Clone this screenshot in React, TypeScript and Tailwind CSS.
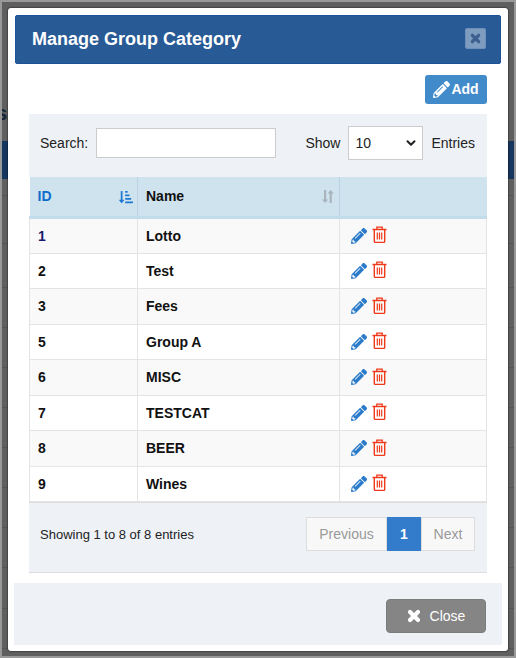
import React from 'react';
import { FaPencilAlt, FaSortAmountDownAlt } from 'react-icons/fa';
import { ChevronDown } from 'lucide-react';

const rows = [
    { id: 1, name: 'Lotto' },
    { id: 2, name: 'Test' },
    { id: 3, name: 'Fees' },
    { id: 5, name: 'Group A' },
    { id: 6, name: 'MISC' },
    { id: 7, name: 'TESTCAT' },
    { id: 8, name: 'BEER' },
    { id: 9, name: 'Wines' },
];

const backdropLines = [195, 243, 287, 327, 367, 407, 447, 487, 527, 567, 608, 648];

const SortBoth = () => (
    <svg width="14" height="15" viewBox="0 0 14 15" fill="#a9b4bd">
        <path d="M3 1h2.200v9.500h2L4.100 14 1 10.500h2zM10.800 14H8.600V4.500h-2L9.700 1l3.100 3.500h-2z" />
    </svg>
);

const CloseX = ({ size }: { size: number }) => (
    <svg width={size} height={size} viewBox="0 0 14 14" fill="none" stroke="currentColor" strokeWidth="4.200" strokeLinecap="round">
        <path d="M3 3l8 8M11 3l-8 8" />
    </svg>
);

const Trash = () => (
    <svg width="15" height="17" viewBox="0 0 15 17" fill="none" stroke="#ee3a1a" className="mb-[2px] shrink-0">
        <path d="M0.500 3.500h14" strokeWidth="1.500" />
        <path d="M4.800 3.200V1.200h5.400v2" strokeWidth="1.300" />
        <path d="M2.300 3.500v11.700a1.200 1.200 0 0 0 1.200 1.200h8a1.200 1.200 0 0 0 1.200-1.200V3.500" strokeWidth="1.400" />
        <path d="M5.300 6.500v7M7.500 6.500v7M9.700 6.500v7" strokeWidth="1.200" />
    </svg>
);

export default function App() {
    return (
        <div className="relative h-[658px] w-[516px] overflow-hidden border-2 border-[#999] bg-[#5f5f5f] font-['Liberation_Sans',Arial,sans-serif] text-[14px] text-[#222]">
            <div className="absolute left-0 top-[139px] h-[38px] w-full bg-[#16365f]" />
            <div className="absolute left-[-6px] top-[96px] text-[20px] font-bold text-[#14233a]">s</div>
            {backdropLines.map((y) => (
                <div key={y} className="absolute left-0 h-px w-full bg-[#555]" style={{ top: y - 2 }} />
            ))}

            <div className="absolute left-[6px] top-[6px] h-[643px] w-[500px] rounded-[3px] bg-white shadow-[0_0_2px_#000]">
                <div className="flex h-full flex-col px-[7px] pt-[7px]">
                    <div className="flex h-[49px] shrink-0 items-center justify-between rounded-[2px] border border-[#1c5398] bg-[#285a96] pl-[16px] pr-[14px]">
                        <h1 className="text-[18px] font-bold text-white">Manage Group Category</h1>
                        <button className="mb-[3px] flex h-[21px] w-[21px] items-center justify-center rounded-[2px] border border-[#6f90bb] bg-[#7e9bc0] text-[#3c5f8e]">
                            <CloseX size={11} />
                        </button>
                    </div>

                    <div className="mx-[14px] flex justify-end pt-[11px]">
                        <button className="flex h-[29px] w-[62px] items-center justify-center gap-[1px] rounded-[3px] bg-[#428bca] text-[14px] font-bold text-white">
                            <FaPencilAlt size={17} />
                            Add
                        </button>
                    </div>

                    <div className="mx-[14px] mt-[10px] flex flex-col border-b border-[#ddd] bg-[#eef1f6]">
                        <div className="flex h-[63px] items-center pb-[5px] pl-[11px] pr-[12px]">
                            <span>Search:</span>
                            <input className="ml-[8px] h-[30px] w-[180px] border border-[#ccc] bg-white" />
                            <span className="ml-auto">Show</span>
                            <div className="ml-[8px] flex h-[34px] w-[75px] items-center justify-between border border-[#ccc] bg-white pl-[6px] pr-[4px] text-[14px]">
                                10
                                <ChevronDown size={14} strokeWidth={3.5} />
                            </div>
                            <span className="ml-[8px]">Entries</span>
                        </div>

                        <table className="w-full table-fixed border-collapse bg-white">
                            <thead>
                                <tr className="h-[40.5px] border-b-[3px] border-[#c3dcea] bg-[#cfe3ef] font-bold">
                                    <th className="w-[108px] border-r border-[#b9d3e2] pl-[8px] pr-[4px] text-left text-[#0d6ecb]">
                                        <div className="flex items-center justify-between">
                                            ID
                                            <FaSortAmountDownAlt size={14} className="text-[#1d78d2]" />
                                        </div>
                                    </th>
                                    <th className="w-[202px] border-r border-[#b9d3e2] pl-[8px] pr-[4px] text-left text-[#111]">
                                        <div className="flex items-center justify-between">
                                            Name
                                            <SortBoth />
                                        </div>
                                    </th>
                                    <th />
                                </tr>
                            </thead>
                            <tbody>
                                {rows.map((row, i) => (
                                    <tr key={row.id} className={`h-[35.5px] border-b border-[#e4e4e4] font-bold text-[#111] ${i % 2 === 0 ? 'bg-[#f9f9f9]' : 'bg-white'}`}>
                                        <td className={`border-x border-[#e4e4e4] px-[8px] pt-[1px] ${row.id === 1 ? 'text-[#1a1a6e]' : ''}`}>{row.id}</td>
                                        <td className="border-r border-[#e4e4e4] px-[8px] pt-[1px]">{row.name}</td>
                                        <td className="border-r border-[#e4e4e4] px-[11px]">
                                            <div className="flex items-center gap-[5px]">
                                                <FaPencilAlt size={16} className="text-[#2a7bc9]" />
                                                <Trash />
                                            </div>
                                        </td>
                                    </tr>
                                ))}
                            </tbody>
                        </table>

                        <div className="flex h-[69.5px] items-center justify-between border-t border-[#ddd] pb-[6px] pl-[11px] pr-[12px]">
                            <span className="text-[13px]">Showing 1 to 8 of 8 entries</span>
                            <div className="flex h-[34px] text-[14px]">
                                <span className="flex w-[81px] items-center justify-center border border-[#ddd] bg-[#f8f8f8] text-[#999]">Previous</span>
                                <span className="flex w-[34px] items-center justify-center bg-[#337ccb] font-bold text-white">1</span>
                                <span className="flex w-[54px] items-center justify-center border border-[#ddd] bg-[#f8f8f8] text-[#999]">Next</span>
                            </div>
                        </div>
                    </div>

                    <div className="-mx-px mt-[10px] flex h-[62px] items-center justify-end bg-[#eef1f6] pr-[16px] pt-[4px]">
                        <button className="flex h-[34px] w-[100px] items-center justify-center gap-[9px] rounded-[4px] border border-[#7c7c7c] bg-[#858585] pt-[1px] text-white">
                            <CloseX size={14} />
                            Close
                        </button>
                    </div>
                </div>
            </div>
        </div>
    );
}
